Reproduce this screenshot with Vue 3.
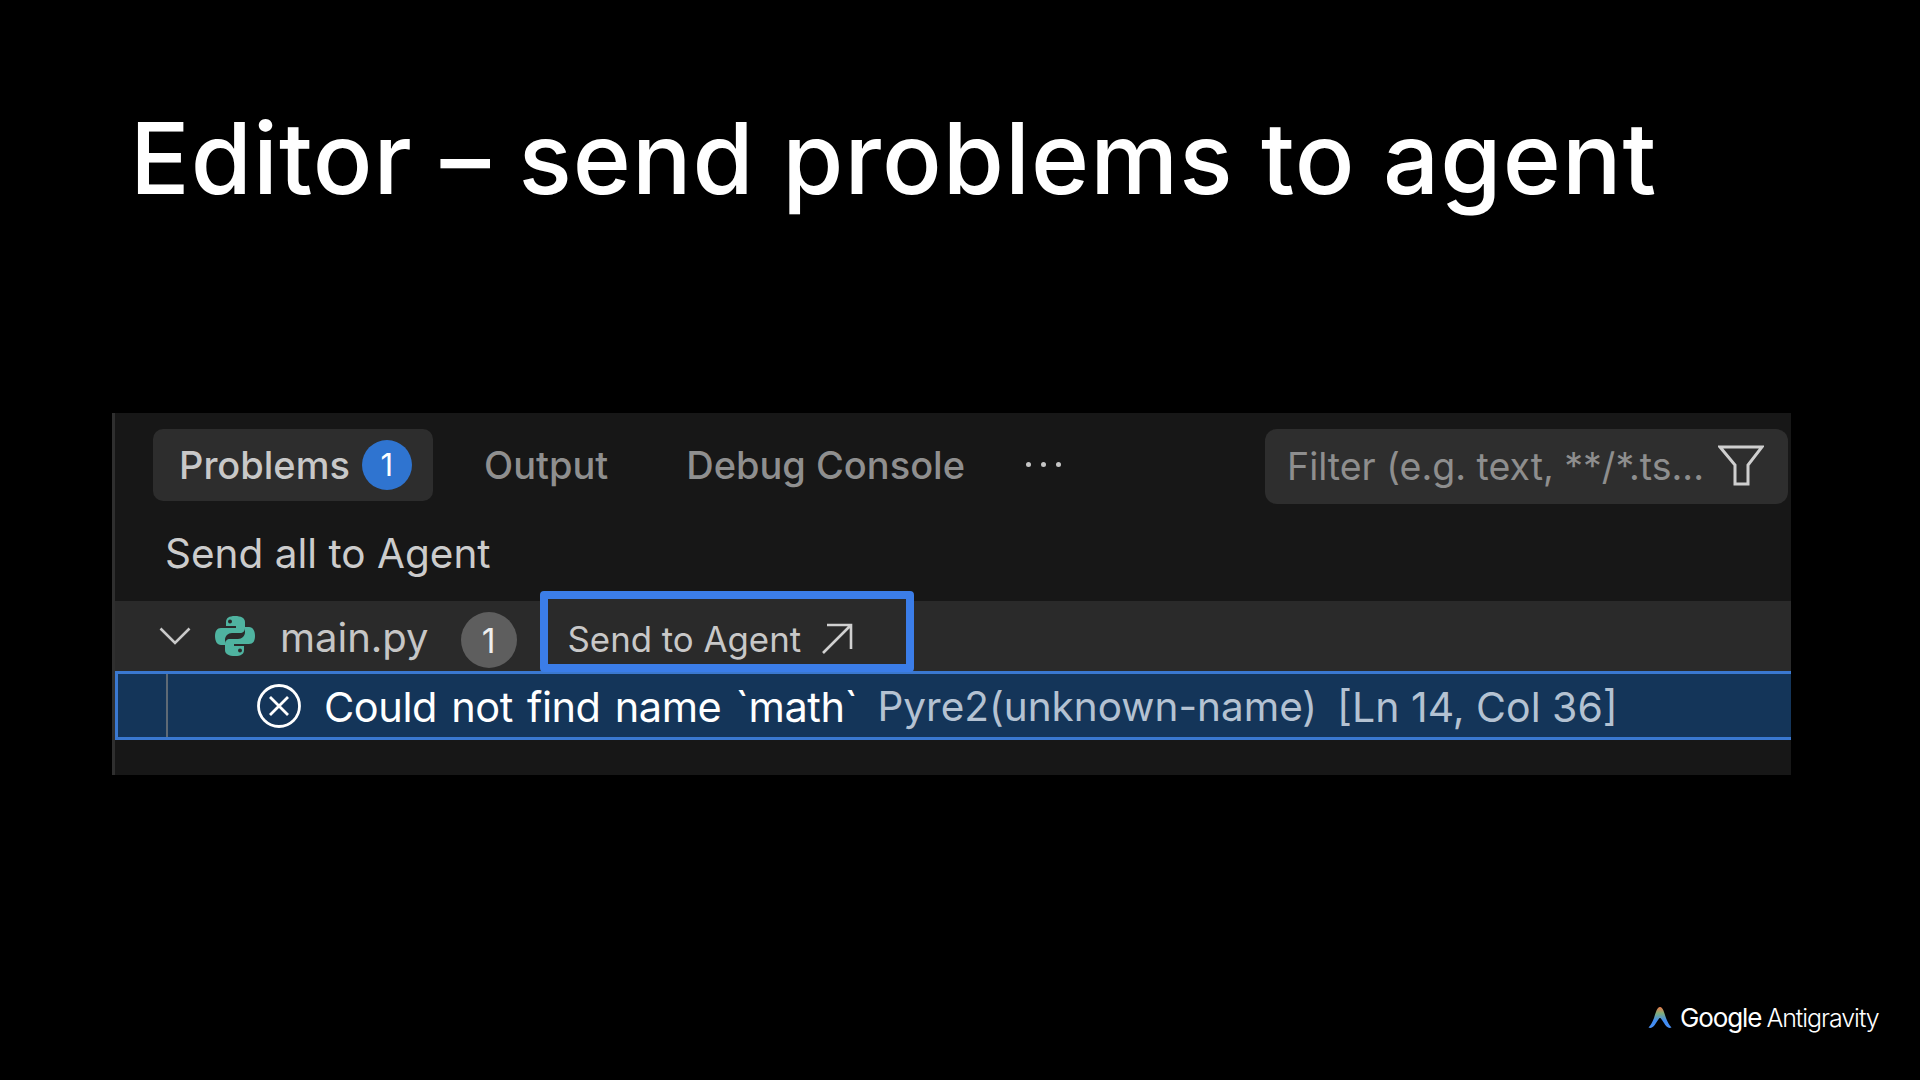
<template>
  <div class="slide">
    <h1 class="title">Editor – send problems to agent</h1>
    <section class="panel">
      <div class="tabs">
        <div class="tab active">
          <span>Problems</span>
          <span class="count blue">1</span>
        </div>
        <div class="tab">Output</div>
        <div class="tab debug">Debug Console</div>
        <div class="dots"><i></i><i></i><i></i></div>
        <div class="filter">
          <span class="placeholder">Filter (e.g. text, **/*.ts...</span>
          <svg class="funnel" width="46" height="42" viewBox="0 0 46 42" fill="none">
            <path d="M2 2H44L30 20V39H17V20Z" stroke="#cfcfcf" stroke-width="3" stroke-linejoin="miter" />
          </svg>
        </div>
      </div>
      <div class="send-all">Send all to Agent</div>
      <div class="file-row">
        <svg class="chevron" width="32" height="20" viewBox="0 0 32 20" fill="none">
          <path d="M1.5 2.5L16 17L30.5 2.5" stroke="#c9c9c9" stroke-width="2.6" />
        </svg>
        <svg class="py" width="40" height="42" viewBox="0 0 40 42">
          <path fill="#4fb3a0" d="M20 1c-6 0-9 2-9 6v4h10v2H6c-4 0-6 3-6 8s2 9 6 9h4v-5c0-4 3-7 7-7h8c3 0 5-2 5-5V7c0-4-4-6-10-6Zm-5 3.500a2 2 0 1 1 0 4 2 2 0 0 1 0-4Z" />
          <path fill="#4fb3a0" d="M20 41c6 0 9-2 9-6v-4H19v-2h15c4 0 6-3 6-8s-2-9-6-9h-4v5c0 4-3 7-7 7h-8c-3 0-5 2-5 5v6c0 4 4 6 10 6Zm5-3.500a2 2 0 1 1 0-4 2 2 0 0 1 0 4Z" />
        </svg>
        <span class="filename">main.py</span>
        <span class="count gray">1</span>
        <button class="send-one">
          <span>Send to Agent</span>
          <svg width="32" height="32" viewBox="0 0 32 32" fill="none">
            <path d="M2 30L30 2M6 2H30V26" stroke="#d0d0d0" stroke-width="2.600" />
          </svg>
        </button>
      </div>
      <div class="problem">
        <div class="gutter"></div>
        <svg class="error" width="44" height="44" viewBox="0 0 44 44" fill="none">
          <circle cx="22" cy="22" r="20.500" stroke="#fff" stroke-width="2.800" />
          <path d="M13 13L31 31M31 13L13 31" stroke="#fff" stroke-width="2.800" />
        </svg>
        <span class="message">Could not find name `math`</span>
        <span class="source">Pyre2(unknown-name)</span>
        <span class="source loc">[Ln 14, Col 36]</span>
      </div>
      <div class="tail"></div>
    </section>
    <footer class="brand">
      <svg width="24" height="24" viewBox="0 0 24 24">
        <defs>
          <linearGradient id="ag" x1="0" y1="0" x2="0" y2="1">
            <stop offset="0" stop-color="#ee7a4a" />
            <stop offset="0.3" stop-color="#7fae7a" />
            <stop offset="0.65" stop-color="#3f8bf0" />
            <stop offset="1" stop-color="#4a90f5" />
          </linearGradient>
        </defs>
        <path fill="url(#ag)" d="M12 1c3 0 4 5 6 11 1.500 4 3 7 5.500 9.500-3 1.500-5.500-1-7.500-4.500-2-3-3-5-4-5s-2 2-4 5c-2 3.500-4.500 6-7.500 4.500C3 19 4.500 16 6 12 8 6 9 1 12 1Z" />
      </svg>
      <span class="google">Google</span>
      <span class="anti">Antigravity</span>
    </footer>
  </div>
</template>

<script setup>
</script>

<style>
html, body { margin: 0; background: #000; }
</style>

<style scoped>
.slide {
  width: 1920px;
  height: 1080px;
  background: #000;
  overflow: hidden;
  position: relative;
  font-family: "Inter", "Liberation Sans", sans-serif;
}
.title {
  margin: 0;
  padding: 97px 0 0 130px;
  height: 413px;
  box-sizing: border-box;
  font-family: "Inter", "Liberation Sans", sans-serif;
  font-size: 99px;
  line-height: 122px;
  font-weight: 500;
  letter-spacing: 1.05px;
  color: #fff;
  white-space: nowrap;
}
.panel {
  width: 1679px;
  margin-left: 112px;
  box-sizing: border-box;
  border-left: 3px solid #2f2f2f;
  background: #171717;
}
.tabs {
  height: 103px;
  display: flex;
  align-items: center;
  box-sizing: border-box;
  padding: 0 3px 0 38px;
  font-size: 38px;
  font-weight: 500;
  color: #8f8f8f;
}
.tab { white-space: nowrap; }
.tab.active {
  height: 72px;
  width: 280px;
  box-sizing: border-box;
  padding-left: 26px;
  display: flex;
  align-items: center;
  gap: 12px;
  background: #2d2d2d;
  border-radius: 10px;
  color: #c8c8c8;
}
.tab:nth-child(2) { margin-left: 51px; }
.debug { margin-left: 78px; }
.count {
  display: flex;
  align-items: center;
  justify-content: center;
  border-radius: 50%;
  flex: none;
  font-weight: 400;
  color: #fff;
}
.blue {
  width: 50px;
  height: 50px;
  background: #2f74d0;
  font-size: 31px;
}
.gray {
  width: 56px;
  height: 56px;
  background: #5e5e5e;
  font-size: 34px;
  margin: 8px 0 0 32px;
  color: #eee;
}
.dots {
  display: flex;
  gap: 10px;
  margin-left: 61px;
}
.dots i {
  width: 5px;
  height: 5px;
  border-radius: 50%;
  background: #c5c5c5;
}
.filter {
  margin-top: 3px;
  margin-left: auto;
  width: 523px;
  height: 75px;
  box-sizing: border-box;
  padding: 0 24px 0 22px;
  display: flex;
  align-items: center;
  justify-content: space-between;
  background: #2e2e2e;
  border-radius: 12px;
}
.placeholder {
  font-size: 37.5px;
  font-weight: 400;
  color: #8e8e8e;
  white-space: nowrap;
}
.funnel { flex: none; }
.send-all {
  height: 85px;
  box-sizing: border-box;
  padding: 0 0 10px 50px;
  display: flex;
  align-items: center;
  font-size: 40.5px;
  color: #cccccc;
}
.file-row {
  height: 70px;
  display: flex;
  align-items: center;
  background: #2a2a2a;
  padding-left: 44px;
  color: #c8c8c8;
}
.chevron { flex: none; }
.py { margin-left: 24px; flex: none; }
.filename {
  margin-left: 25px;
  padding-top: 2px;
  font-size: 40px;
  color: #c6c6c6;
}
.send-one {
  margin: -10px 0 0 23px;
  width: 374px;
  height: 81px;
  align-self: flex-start;
  box-sizing: border-box;
  border: 8px solid #3b7de8;
  border-radius: 4px;
  background: #2a2a2a;
  display: flex;
  align-items: center;
  gap: 20px;
  padding: 14px 0 0 20px;
  color: #c8c8c8;
  font-family: inherit;
  font-size: 34.8px;
}
.problem {
  height: 69px;
  box-sizing: border-box;
  display: flex;
  align-items: center;
  margin-left: 0;
  background: #143559;
  border-top: 3px solid #3a78d0;
  border-bottom: 3px solid #3a78d0;
  border-left: 3px solid #3a78d0;
  font-size: 40.5px;
  white-space: nowrap;
}
.gutter {
  align-self: stretch;
  width: 48px;
  border-right: 2px solid #5f6a75;
  flex: none;
}
.error { margin-left: 89px; flex: none; }
.message {
  margin-left: 23px;
  padding-top: 2px;
  font-size: 41.5px;
  word-spacing: 3px;
  letter-spacing: -0.45px;
  color: #fff;
}
.source {
  margin-left: 20px;
  padding-top: 2px;
  color: #b4c2d2;
}
.loc {
  margin-left: 20px;
  font-size: 41px;
}
.tail { height: 35px; }
.brand {
  position: absolute;
  left: 1648px;
  top: 1002px;
  display: flex;
  align-items: center;
  color: #fff;
  white-space: nowrap;
  font-family: "Inter", sans-serif;
}
.google {
  margin-left: 8px;
  font-size: 26px;
  font-weight: 400;
  letter-spacing: -1.1px;
}
.anti {
  margin-left: 5px;
  font-size: 25px;
  font-weight: 300;
  letter-spacing: -1.05px;
}
</style>
